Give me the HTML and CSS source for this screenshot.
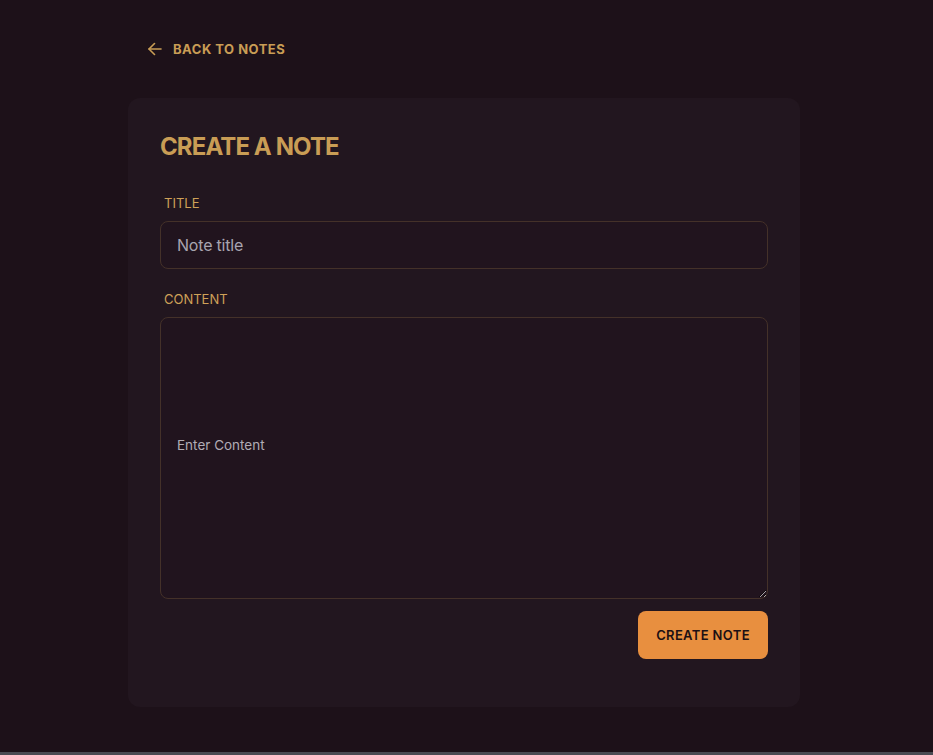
FILE: index.html
```html
<!DOCTYPE html>
<html lang="en">
<head>
<meta charset="utf-8">
<title>Create a note</title>
<link rel="stylesheet" href="styles.css">
</head>
<body>
<main class="page">
  <a class="back" href="#">
    <svg class="back-icon" width="14" height="14" viewBox="0 0 14 14" fill="none" stroke="currentColor" stroke-width="1.6" stroke-linecap="round" stroke-linejoin="round"><path d="M13 7H1"/><path d="M6.5 1.5L1 7l5.5 5.5"/></svg>
    <span>Back to notes</span>
  </a>
  <section class="card">
    <h1 class="heading">Create a note</h1>
    <form class="form">
      <label class="field">
        <span class="label">Title</span>
        <input class="input" type="text" placeholder="Note title">
      </label>
      <label class="field field-last">
        <span class="label">Content</span>
        <textarea class="textarea" placeholder="Enter Content"></textarea>
      </label>
      <div class="actions">
        <button class="btn" type="button">Create note</button>
      </div>
    </form>
  </section>
</main>
<div class="taskbar"></div>
</body>
</html>
```
FILE: styles.css
```css
* { box-sizing: border-box; }
html, body { margin: 0; height: 100%; }
body {
  background: #1d1119;
  font-family: Inter, "Noto Sans", sans-serif;
  color: #c99d55;
  display: flex;
  flex-direction: column;
}
.page {
  flex: 1;
  width: 672px;
  margin-left: 128px;
  padding-top: 40px;
}
.back {
  display: inline-flex;
  align-items: center;
  gap: 11px;
  margin-left: 20px;
  color: #c99d55;
  text-decoration: none;
  font-size: 13px;
  font-weight: 700;
  text-transform: uppercase;
  letter-spacing: 0.5px;
  height: 18px;
}
.back-icon { flex: none; }
.card {
  margin-top: 38px;
  background: #22161f;
  border-radius: 12px;
  padding: 33px 32px 48px;
}
.heading {
  margin: 0;
  font-size: 24px;
  line-height: 32px;
  font-weight: 700;
  text-transform: uppercase;
  letter-spacing: -0.9px;
  color: #c99d55;
}
.form {
  margin-top: 31px;
  display: flex;
  flex-direction: column;
}
.field {
  display: flex;
  flex-direction: column;
  margin-bottom: 21px;
}
.field-last { margin-bottom: 12px; }
.label {
  font-size: 13px;
  line-height: 18px;
  text-transform: uppercase;
  padding-left: 4px;
  margin-bottom: 9px;
  color: #cfa158;
}
.input, .textarea {
  width: 100%;
  background: #21141e;
  border: 1px solid #443129;
  border-radius: 8px;
  font-family: Inter, "Noto Sans", sans-serif;
  color: #e0d8d8;
  outline: none;
}
.input {
  height: 48px;
  padding: 0 16px;
  font-size: 16px;
  letter-spacing: -0.2px;
}
.input::placeholder { color: #a8a4b0; }
.textarea {
  height: 282px;
  padding: 117px 16px 0;
  font-size: 13.5px;
  line-height: 20px;
  resize: vertical;
}
.textarea::placeholder { color: #b1acb5; }
.actions {
  display: flex;
  justify-content: flex-end;
}
.btn {
  width: 130px;
  height: 48px;
  border: none;
  border-radius: 8px;
  background: #e88f3f;
  color: #1c1014;
  font-family: Inter, "Noto Sans", sans-serif;
  font-size: 13px;
  font-weight: 600;
  letter-spacing: 0.35px;
  text-transform: uppercase;
  cursor: pointer;
}
.taskbar {
  height: 3px;
  background: #4a4a52;
}
```
